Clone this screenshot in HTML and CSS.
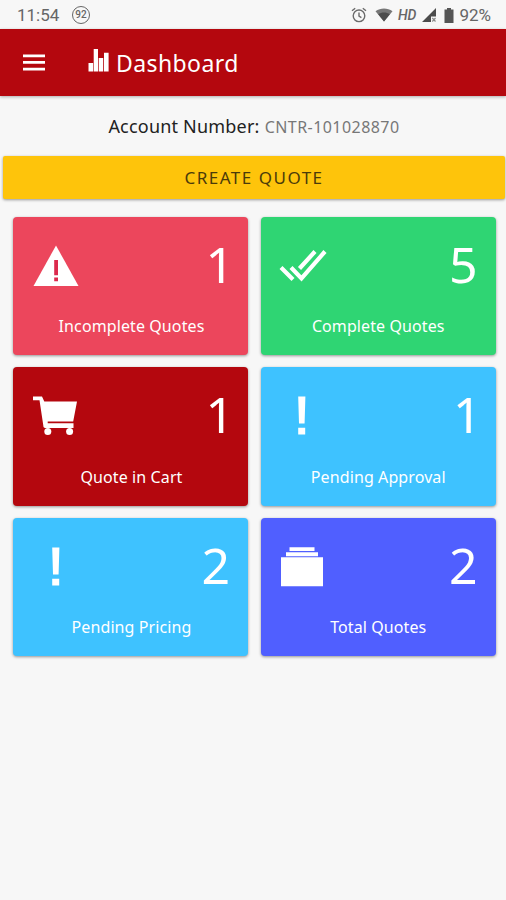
FILE: index.html
```html
<!DOCTYPE html>
<html lang="en">
<head>
  <meta charset="UTF-8">
  <meta name="viewport" content="width=device-width, initial-scale=1.0">
  <title>Dashboard</title>
  <link rel="stylesheet" href="styles.css">
</head>
<body>
  <!-- Status bar -->
  <div class="status-bar">
    <span class="clock">11:54</span>
    <span class="badge">92</span>
    <div class="status-icons">
      <svg class="alarm" width="16" height="16" viewBox="0 0 16 16" fill="none" stroke="#6b6b6b" stroke-width="1.4">
        <circle cx="8" cy="8.8" r="5.8"/>
        <path d="M8 5.5v3.6l2.4 1.5M1 3.8l3.2-2.6M15 3.8l-3.2-2.6"/>
      </svg>
      <svg class="wifi" width="18" height="14" viewBox="0 0 18 14">
        <path d="M0.5 3.2C5.5-.4 12.5-.4 17.5 3.2L9 13.6z" fill="#777"/>
        <path d="M3.2 6.2C6.5 3.8 11.5 3.8 14.8 6.2L9 13.6z" fill="#4c4c4c"/>
      </svg>
      <span class="hd">HD</span>
      <svg class="signal" width="15" height="14" viewBox="0 0 15 14">
        <path d="M14 0v8.500H9V14H0z" fill="#4c4c4c"/>
        <path d="M10.3 10l3.2 3.5M13.5 10l-3.2 3.5" stroke="#888" stroke-width="1.2"/>
      </svg>
      <svg class="battery" width="10" height="15" viewBox="0 0 10 15" fill="#555">
        <path d="M3 0h4v1.5h2.5V15h-9V1.5H3z"/>
      </svg>
      <span class="percent">92%</span>
    </div>
  </div>

  <!-- Header -->
  <header class="header">
    <svg class="menu" width="22" height="17" viewBox="0 0 22 17" fill="#fff">
      <path d="M0 .5h22v2.7H0zM0 7.100h22v2.7H0zM0 13.7h22v2.7H0z"/>
    </svg>
    <svg class="chart" width="22" height="24" viewBox="0 0 22 24" fill="#fff">
      <path d="M.5 15h4.6v8.500H.5zM5.700 1h4.3v22.500H5.700zM10.700 10h4.500v13.500h-4.500zM16 4.800h4.600v18.700H16z"/>
    </svg>
    <h1>Dashboard</h1>
  </header>

  <div class="account">
    <span class="account-label">Account Number:</span>
    <span class="account-number">CNTR-101028870</span>
  </div>

  <button class="create">CREATE QUOTE</button>

  <!-- Quote cards -->
  <main class="cards">
    <div class="card red">
      <div class="card-top">
        <svg width="46" height="44" viewBox="0 0 46 44">
          <path d="M23 1.500l22.500 40.500H.5z" fill="#fff"/>
          <path d="M21.200 16h3.800v15.200h-3.800zM21.200 33.600h3.800v3.700h-3.800z" fill="#dc2a4d"/>
        </svg>
        <span class="count one">1</span>
      </div>
      <p>Incomplete Quotes</p>
    </div>
    <div class="card green">
      <div class="card-top">
        <svg width="48" height="44" viewBox="0 0 48 44" fill="none" stroke="#fff" stroke-width="4.2">
          <path d="M2 23.500l12 12M12 23.500l10.500 11L46 7.500M20.500 24.500L36 7.500"/>
        </svg>
        <span class="count">5</span>
      </div>
      <p>Complete Quotes</p>
    </div>
    <div class="card dark">
      <div class="card-top">
        <svg width="46" height="44" viewBox="0 0 46 44">
          <path d="M0 2.500h9l2.300 5H44l-3.800 20H14.700v1.800H40.500v4.700H12.300c-1.500 0-2-1-2-2.500L6.500 6.300H0z" fill="#fff"/>
          <circle cx="14.800" cy="37.500" r="3.500" fill="#fff"/>
          <circle cx="36.600" cy="37.500" r="3.500" fill="#fff"/>
        </svg>
        <span class="count one">1</span>
      </div>
      <p>Quote in Cart</p>
    </div>
    <div class="card blue">
      <div class="card-top">
        <svg width="46" height="44" viewBox="0 0 46 44" fill="#fff">
          <path d="M19.200 2.500h7.200l-.8 27h-5.600zM19.200 33.700h7V40.500h-7z"/>
        </svg>
        <span class="count one">1</span>
      </div>
      <p>Pending Approval</p>
    </div>
    <div class="card blue">
      <div class="card-top">
        <svg width="46" height="44" viewBox="0 0 46 44" fill="#fff">
          <path d="M19.200 2.500h7.200l-.8 27h-5.600zM19.200 33.700h7V40.500h-7z"/>
        </svg>
        <span class="count">2</span>
      </div>
      <p>Pending Pricing</p>
    </div>
    <div class="card indigo">
      <div class="card-top">
        <svg width="46" height="44" viewBox="0 0 46 44" fill="#fff">
          <path d="M10.500 2.300h25v3.700h-25zM7 7.300h32v4H7zM2 12.300h42v29H2z"/>
        </svg>
        <span class="count">2</span>
      </div>
      <p>Total Quotes</p>
    </div>
  </main>
</body>
</html>
```
FILE: styles.css
```css
* {
  box-sizing: border-box;
  margin: 0;
  padding: 0;
}
body {
  font-family: 'Noto Sans', sans-serif;
  background: #f7f7f7;
  min-height: 100vh;
}
svg {
  display: block;
  flex: none;
}

/* Status bar */
.status-bar {
  display: flex;
  align-items: center;
  height: 29px;
  padding: 1px 15px 0 17px;
  font-family: Roboto, sans-serif;
  font-size: 16px;
  color: #666;
}
.clock {
  width: 55px;
  font-size: 17px;
}
.badge {
  width: 18px;
  height: 18px;
  border: 1.5px solid #666;
  border-radius: 50%;
  font-size: 10px;
  font-weight: 500;
  line-height: 15px;
  text-align: center;
}
.status-icons {
  display: flex;
  align-items: center;
  margin-left: auto;
}
.wifi {
  margin-left: 8px;
}
.hd {
  margin-left: 5px;
  font-size: 14px;
  font-weight: 500;
  font-style: italic;
}
.signal {
  margin-left: 6px;
}
.battery {
  margin: 0 5px 0 7px;
}
.percent {
  font-size: 17px;
}

/* Header */
.header {
  display: flex;
  align-items: center;
  height: 67px;
  padding: 0 23px;
  background: #b4070e;
  color: #fff;
  box-shadow: 0 1px 3px rgba(0, 0, 0, 0.3);
}
.chart {
  margin: -6px 0 0 43px;
}
h1 {
  margin-left: 6px;
  padding-top: 1px;
  font-size: 23px;
  font-weight: 400;
  letter-spacing: 0.4px;
}

.account {
  display: flex;
  justify-content: center;
  align-items: baseline;
  gap: 5px;
  height: 60px;
  padding: 18px 0 0 2px;
}
.account-label {
  font-size: 18px;
  letter-spacing: 0.2px;
  color: #222;
}
.account-number {
  font-size: 16px;
  letter-spacing: 0.45px;
  color: #777;
}

.create {
  display: block;
  width: 502px;
  height: 43px;
  margin-left: 3px;
  border: none;
  border-radius: 2px;
  background: #fec40b;
  box-shadow: 0 1px 3px rgba(0, 0, 0, 0.4);
  color: #4b3b0a;
  font-family: inherit;
  font-size: 17px;
  letter-spacing: 1.5px;
}

/* Cards */
.cards {
  display: grid;
  grid-template-columns: 235px 235px;
  grid-auto-rows: 138.5px;
  gap: 12px 12.5px;
  padding: 17.5px 0 0 13px;
}
.card {
  padding: 27px 18px 0 20px;
  border-radius: 4px;
  box-shadow: 0 1px 3px rgba(0, 0, 0, 0.4);
  color: #fff;
}
.card:nth-child(even) {
  padding-left: 18.5px;
}
.card-top {
  display: flex;
  justify-content: space-between;
  height: 44px;
}
.count {
  font-size: 50px;
  line-height: 41px;
}
.one {
  margin-right: -4px;
}
.card p {
  margin: 27.5px 0 0;
  font-size: 16px;
  letter-spacing: 0.1px;
  line-height: 22px;
  text-align: center;
}
.red {
  background: #ec465c;
}
.green {
  background: #2fd573;
}
.dark {
  background: #b4070e;
}
.blue {
  background: #3ec2ff;
}
.indigo {
  background: #505fff;
}
```
